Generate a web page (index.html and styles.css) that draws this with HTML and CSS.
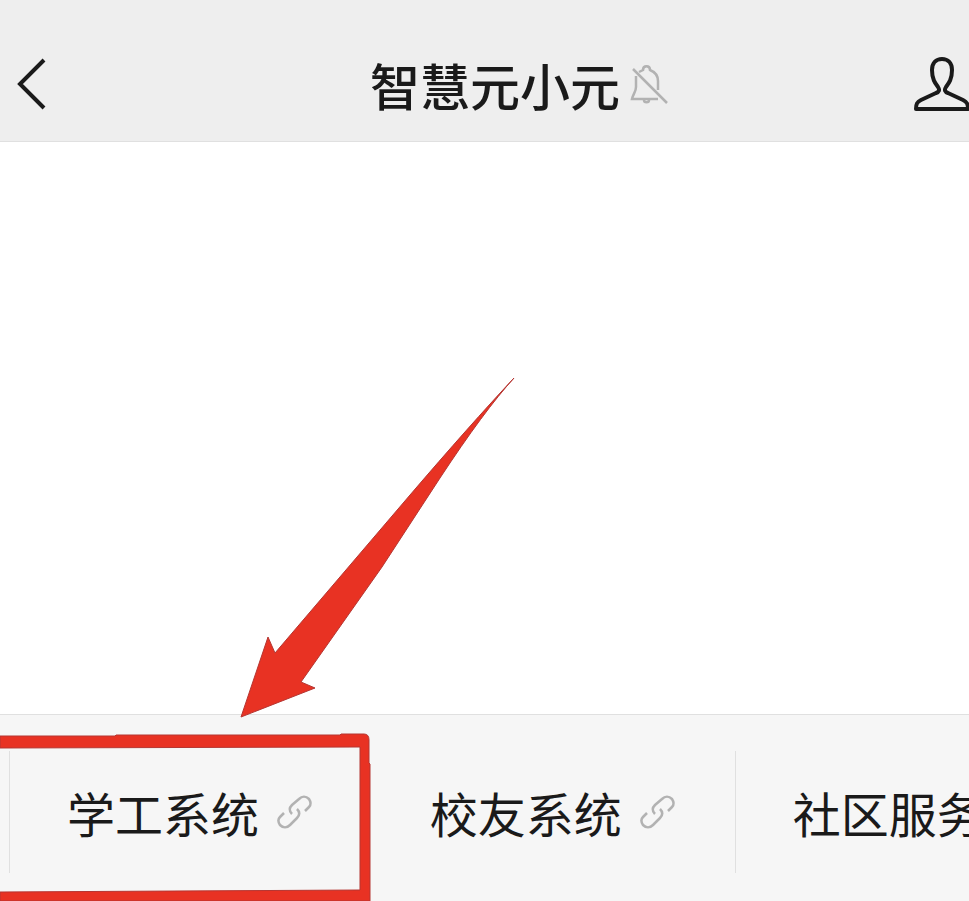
FILE: index.html
```html
<!DOCTYPE html>
<html lang="zh-CN">
  <head>
    <meta charset="UTF-8" />
    <meta name="viewport" content="width=device-width, initial-scale=1.0" />
    <title>智慧元小元</title>
    <link rel="stylesheet" href="styles.css">
  </head>
  <body>
    <header class="header">
      <button type="button" class="back-button" aria-label="返回">
        <svg width="30" height="52" viewBox="0 0 30 52" fill="none" stroke="currentColor" stroke-width="4">
          <path d="M28 2 L4 26 L28 50" />
        </svg>
      </button>
      <div class="header-center">
        <h1 class="header-title">智慧元小元</h1>
        <svg class="muted-icon" width="38" height="40" viewBox="0 0 38 40" fill="none" stroke="currentColor" stroke-width="2.5">
          <path d="M6 12 V23 C6 28 3 30 2 35 H28" />
          <path d="M9 8 L13 6 C13 1 20 1 20 6 C25 8 28 11 28 17 V26" />
          <path d="M14 36 C14 39 19 39 19 36" />
          <path d="M3 5 L37 39" />
        </svg>
      </div>
      <button type="button" class="profile-button" aria-label="公众号资料">
        <svg width="55" height="56" viewBox="0 0 55 56" fill="none" stroke="currentColor" stroke-width="4" stroke-linejoin="round">
          <path d="M28 3 C22 3 18 7 18 14 C18 23 21 27 24 31 C26 34 25 36 22 37 L7 44 C3 46 2 48 2 53 H54 C54 48 53 46 49 44 L34 37 C31 36 30 34 32 31 C35 27 38 23 38 14 C38 7 34 3 28 3 Z" />
        </svg>
      </button>
    </header>

    <main class="messages"></main>

    <nav class="menu">
      <a href="#" class="menu-item divided">
        学工系统
        <svg class="link-icon" width="38" height="34" viewBox="0 0 38 34">
          <use href="#link" />
        </svg>
      </a>
      <a href="#" class="menu-item">
        校友系统
        <svg class="link-icon" width="38" height="34" viewBox="0 0 38 34">
          <use href="#link" />
        </svg>
      </a>
      <a href="#" class="menu-item divided">
        社区服务
        <svg class="link-icon" width="38" height="34" viewBox="0 0 38 34">
          <defs>
            <g id="link" fill="none" stroke="currentColor" stroke-width="2.5">
              <path d="M15 19 C12 16 12 13 15 10 L22 4 C25 1 29 1 32 4 C34 7 34 10 32 12 L28 16" />
              <path d="M20 14 C23 17 23 20 20 23 L13 30 C10 33 6 33 3 30 C1 27 1 24 3 22 L7 18" />
            </g>
          </defs>
          <use href="#link" />
        </svg>
      </a>
    </nav>

    <!-- Arrow and frame pointing at the first menu item -->
    <svg class="callout" width="520" height="530" viewBox="0 0 520 530" aria-hidden="true">
      <path class="callout-arrow" d="M514 7 Q470 54 410 124 L275 282 L268 266 L241 346 L315 317 L301 311 L382 196 L440 107 Q484 40 514 7 Z" />
      <path class="callout-frame" d="M0 365 L115 365 L116 364 L340 364 L341 363 H364 Q369 363 369 369 V392 L370 393 V530 H0 V521 L360 519 V376 L0 377 Z" />
    </svg>
  </body>
</html>
```
FILE: styles.css
```css
:root {
  --bg-header: #eeeeee;
  --bg-menu: #f6f6f6;
  --border: #e0e0e0;
  --text-primary: #1a1a1a;
  --icon-muted: #b2b2b2;
  --callout: #e83223;
  --callout-edge: #b53632;
}

* {
  margin: 0;
  padding: 0;
  box-sizing: border-box;
}

body {
  position: relative;
  display: flex;
  flex-direction: column;
  min-height: 100vh;
  overflow: hidden;
  font-family: "Noto Sans CJK SC", sans-serif;
  background: #ffffff;
  color: var(--text-primary);
}

button {
  display: flex;
  background: none;
  border: none;
  color: inherit;
  cursor: pointer;
}

.header {
  display: flex;
  align-items: center;
  padding-top: 26px;
  height: 142px;
  background: var(--bg-header);
  border-bottom: 1px solid var(--border);
}

.back-button {
  width: 124px;
  padding-left: 16px;
}

.header-center {
  flex: 1;
  display: flex;
  align-items: center;
  justify-content: center;
  gap: 10px;
}

.header-title {
  font-size: 50px;
  font-weight: 500;
  line-height: 60px;
}

.muted-icon,
.link-icon {
  flex-shrink: 0;
  color: var(--icon-muted);
}

.messages {
  flex: 1;
}

.menu {
  display: flex;
  padding: 36px 0 28px 9px;
  background: var(--bg-menu);
  border-top: 1px solid var(--border);
}

.menu-item {
  flex: 0 0 37.8%;
  display: flex;
  align-items: center;
  justify-content: center;
  gap: 18px;
  height: 122px;
  border-left: 1px solid transparent;
  color: inherit;
  font-size: 48px;
  line-height: 60px;
  text-decoration: none;
  white-space: nowrap;
}

.menu-item.divided {
  border-left-color: var(--border);
}

.callout {
  position: absolute;
  left: 0;
  bottom: 0;
  pointer-events: none;
}

.callout-arrow,
.callout-frame {
  fill: var(--callout);
  stroke: var(--callout-edge);
  stroke-width: 1;
}
```
